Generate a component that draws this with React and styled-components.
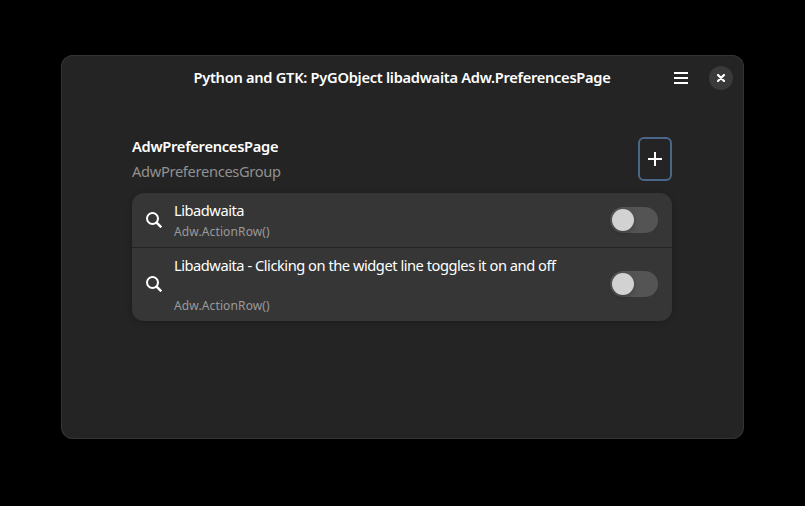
import React, { useState } from "react";
import styled, { createGlobalStyle } from "styled-components";

const GlobalStyle = createGlobalStyle`
  * { box-sizing: border-box; }
  body { margin: 0; background: #000; }
`;

const Desktop = styled.main`
  width: 805px;
  height: 506px;
  padding: 55px 61px 67px;
  background: #000;
  font-family: "Noto Sans", sans-serif;
  color: #fff;
  overflow: hidden;
`;

const Window = styled.section`
  width: 683px;
  height: 384px;
  background: #242424;
  border-radius: 12px;
  box-shadow: inset 0 0 0 1px #343434;
`;

const HeaderBar = styled.header`
  display: grid;
  grid-template-columns: 100px 1fr 100px;
  align-items: center;
  height: 46px;
`;

const Title = styled.h1`
  grid-column: 2;
  margin: 0 1px 2px 0;
  text-align: center;
  white-space: nowrap;
  font-size: 14.67px;
  line-height: 20px;
  font-weight: 600;
  letter-spacing: -0.29px;
`;

const HeaderActions = styled.div`
  display: flex;
  justify-content: flex-end;
  align-items: center;
  gap: 11px;
  padding-right: 11px;
`;

const HeaderButton = styled.button`
  display: grid;
  place-items: center;
  width: ${(p) => (p.$round ? "24px" : "34px")};
  height: 24px;
  padding: 0;
  border: 0;
  border-radius: ${(p) => (p.$round ? "50%" : "6px")};
  background: ${(p) => (p.$round ? "#3a3a3a" : "transparent")};
  color: #fff;
`;

const Page = styled.div`
  width: 540px;
  margin: 36px 0 0 71px;
`;

const GroupHeader = styled.div`
  display: flex;
  justify-content: space-between;
  height: 44px;
  margin-bottom: 12px;
`;

const GroupText = styled.div`
  margin-top: -1px;
`;

const GroupTitle = styled.h2`
  margin: 0;
  font-size: 14.67px;
  line-height: 20px;
  font-weight: 600;
  letter-spacing: -0.28px;
`;

const GroupDescription = styled.p`
  margin: 5px 0 0;
  font-size: 14.67px;
  line-height: 20px;
  letter-spacing: -0.32px;
  color: #919191;
`;

const AddButton = styled.button`
  display: grid;
  place-items: center;
  width: 34px;
  height: 44px;
  padding: 0;
  border: 2px solid #4a678a;
  border-radius: 6px;
  background: transparent;
  color: #fff;
`;

const List = styled.div`
  border-radius: 12px;
  background: #363636;
  box-shadow: 0 1px 3px 1px rgba(0, 0, 0, 0.1), 0 2px 6px 2px rgba(0, 0, 0, 0.04);
`;

const ActionRow = styled.div`
  display: flex;
  align-items: center;
  height: ${(p) => p.$height};
  padding: 0 14px;
  & + & { border-top: 1px solid #232323; padding-bottom: 1px; }
`;

const RowText = styled.div`
  display: flex;
  flex-direction: column;
  justify-content: space-between;
  flex: 1;
  align-self: stretch;
  margin-left: 12px;
  padding: 7px 0 ${(p) => p.$bottom};
`;

const RowTitle = styled.span`
  font-size: 14.67px;
  line-height: 20px;
  letter-spacing: -0.47px;
`;

const RowSubtitle = styled.span`
  font-size: 12px;
  line-height: 16px;
  letter-spacing: 0.13px;
  color: #9a9a9a;
`;

const Switch = styled.button`
  display: flex;
  justify-content: ${(p) => (p.$on ? "flex-end" : "flex-start")};
  align-items: center;
  width: 48px;
  height: 26px;
  padding: 2px;
  border: 0;
  border-radius: 13px;
  background: ${(p) => (p.$on ? "#3584e4" : "#545454")};
`;

const Knob = styled.span`
  width: 22px;
  height: 22px;
  border-radius: 50%;
  background: #d2d2d2;
  box-shadow: 0 2px 4px rgba(0, 0, 0, 0.25);
`;

const SearchIcon = () => (
  <svg width="16" height="16" viewBox="0 0 16 16" fill="none" stroke="#fff" strokeWidth="2">
    <circle cx="6.5" cy="6.5" r="5.5" />
    <path d="m10.4 10.4 4.9 4.9" strokeWidth="2.5" />
  </svg>
);

const MenuIcon = () => (
  <svg width="14" height="12" viewBox="0 0 14 12" fill="currentColor">
    <path d="M0 0h14v2H0zM0 5h14v2H0zM0 10h14v2H0z" />
  </svg>
);

const CloseIcon = () => (
  <svg width="8" height="8" viewBox="0 0 8 8" stroke="currentColor" strokeWidth="2.2" strokeLinecap="round">
    <path d="m1 1 6 6M7 1 1 7" />
  </svg>
);

const PlusIcon = () => (
  <svg width="14" height="14" viewBox="0 0 14 14" fill="currentColor">
    <path d="M6 0h2v6h6v2H8v6H6V8H0V6h6z" />
  </svg>
);

function PreferenceRow({ title, subtitle, height, bottom }) {
  const [on, setOn] = useState(false);
  return (
    <ActionRow $height={height}>
      <SearchIcon />
      <RowText $bottom={bottom}>
        <RowTitle>{title}</RowTitle>
        <RowSubtitle>{subtitle}</RowSubtitle>
      </RowText>
      <Switch role="switch" aria-checked={on} aria-label={title} $on={on} onClick={() => setOn(!on)}>
        <Knob />
      </Switch>
    </ActionRow>
  );
}

export default function App() {
  return (
    <>
      <GlobalStyle />
      <Desktop>
        <Window>
          <HeaderBar>
            <Title>Python and GTK: PyGObject libadwaita Adw.PreferencesPage</Title>
            <HeaderActions>
              <HeaderButton aria-label="Main menu"><MenuIcon /></HeaderButton>
              <HeaderButton $round aria-label="Close"><CloseIcon /></HeaderButton>
            </HeaderActions>
          </HeaderBar>
          <Page>
            <GroupHeader>
              <GroupText>
                <GroupTitle>AdwPreferencesPage</GroupTitle>
                <GroupDescription>AdwPreferencesGroup</GroupDescription>
              </GroupText>
              <AddButton aria-label="Add"><PlusIcon /></AddButton>
            </GroupHeader>
            <List>
              <PreferenceRow title="Libadwaita" subtitle="Adw.ActionRow()" height="54px" bottom="7px" />
              <PreferenceRow
                title="Libadwaita - Clicking on the widget line toggles it on and off"
                subtitle="Adw.ActionRow()"
                height="74px"
                bottom="6px"
              />
            </List>
          </Page>
        </Window>
      </Desktop>
    </>
  );
}
